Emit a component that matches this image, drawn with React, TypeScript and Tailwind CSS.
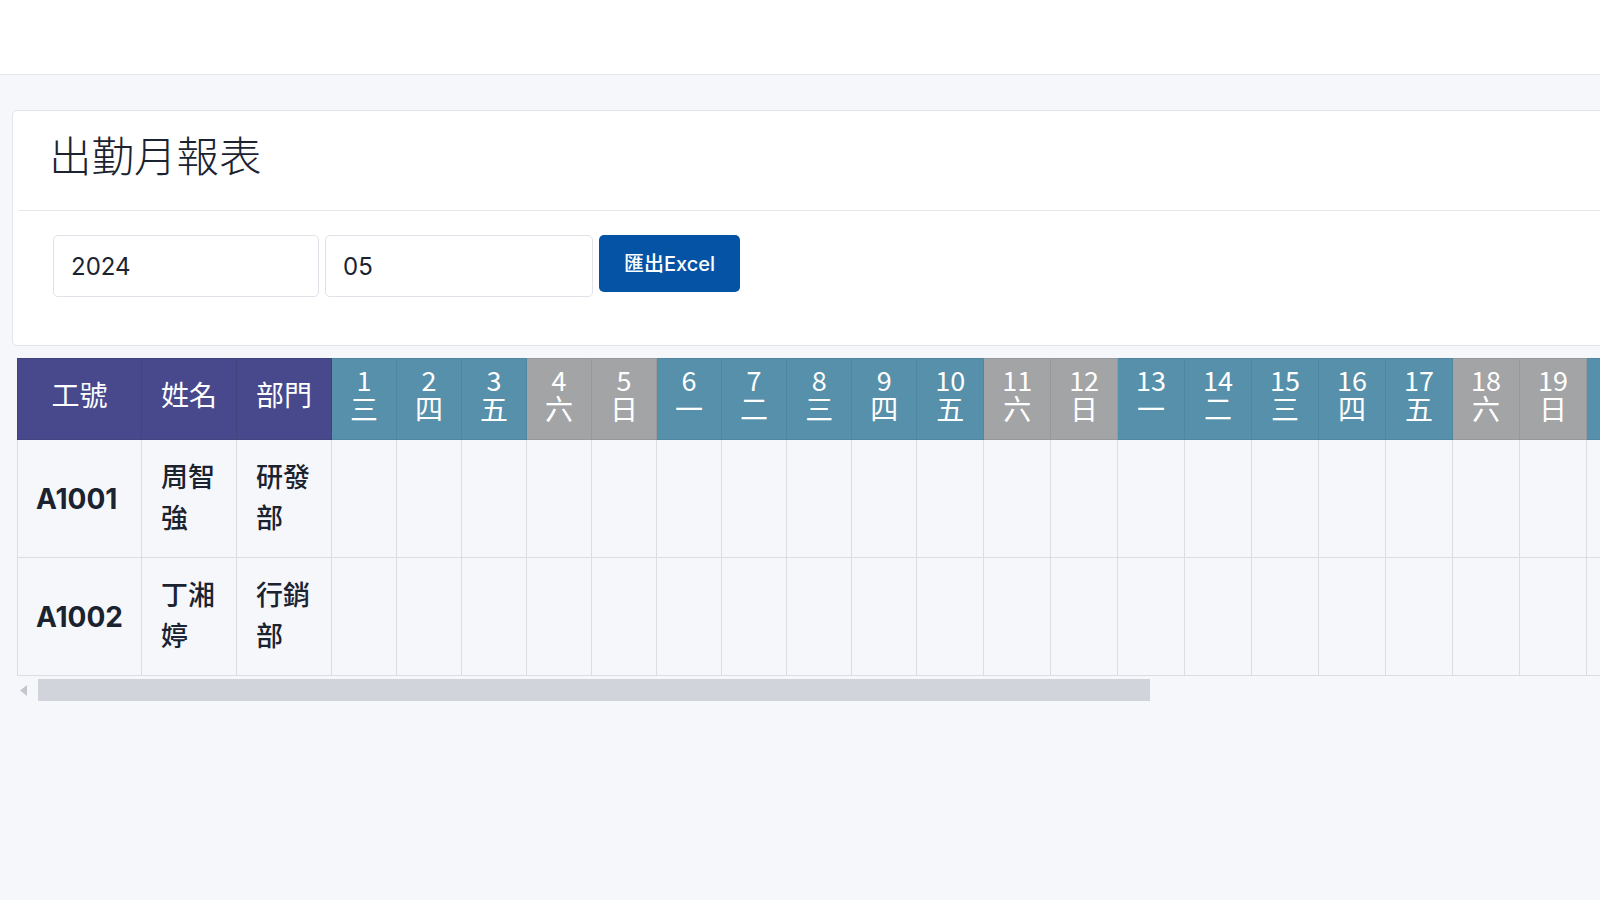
import React from "react";

const cjk = "font-['Inter','Noto_Sans_CJK_TC',sans-serif]";

const weekNames = ["日", "一", "二", "三", "四", "五", "六"];

// 2024年5月：1號是星期三
const days = Array.from({ length: 31 }, (_, i) => {
  const d = i + 1;
  const w = (3 + i) % 7;
  return { d, w: weekNames[w], off: w === 0 || w === 6 };
});

const staff = [
  { id: "A1001", name: "周智強", dept: "研發部" },
  { id: "A1002", name: "丁湘婷", dept: "行銷部" },
];

function App() {
  return (
    <div className={`w-full min-h-screen overflow-hidden bg-[#f6f7fb] ${cjk}`}>
      <header className="h-[75px] bg-white border-b border-[#e3e6eb]" />

      <main className="w-[2500px] pl-[12px] pt-[35px]">
        <div className="bg-white border border-[#e1e4e9] rounded-[5px] p-[6px]">
          <div className="px-[30px] pt-[12px] pb-[31px] border-b border-[#e3e6eb]">
            <h1 className="text-[42.5px] leading-[50px] font-light text-[#1b2330] font-['Noto_Sans_CJK_TC',sans-serif]">
              出勤月報表
            </h1>
          </div>
          <div className="flex items-start gap-[6px] px-[34px] pt-[24px] pb-[42px]">
            <input
              defaultValue="2024"
              className="w-[266px] h-[62px] px-[17px] border border-[#dfe2e8] rounded-[5px] bg-white text-[24px] text-[#1b2330] outline-none"
            />
            <input
              defaultValue="05"
              className="w-[268px] h-[62px] px-[17px] border border-[#dfe2e8] rounded-[5px] bg-white text-[24px] text-[#1b2330] outline-none"
            />
            <button className="h-[57px] px-[25px] rounded-[5px] bg-[#0453a5] text-white text-[20px] font-medium">
              匯出Excel
            </button>
          </div>
        </div>

        <div className="ml-[5px] mt-[12px]">
          <table className="w-px border-collapse border border-[#d6dbe1]">
            <thead>
              <tr className="text-white text-[28px] font-['Noto_Sans_CJK_TC',sans-serif]">
                {["工號", "姓名", "部門"].map((h) => (
                  <th
                    key={h}
                    className="whitespace-nowrap bg-[#47498c] border border-[#42447f] px-[19px] pt-[7px] pb-[17px] font-normal leading-[28px] align-middle"
                  >
                    {h}
                  </th>
                ))}
                {days.map((x) => (
                  <th
                    key={x.d}
                    className={`whitespace-nowrap px-[18px] pt-[7px] pb-[17px] font-normal leading-[28px] text-center ${
                      x.off
                        ? "bg-[#a3a4a6] border border-[#97989b]"
                        : "bg-[#5690aa] border border-[#4f87a0]"
                    }`}
                  >
                    <div className="text-[27px]">{x.d}</div>
                    <div>{x.w}</div>
                  </th>
                ))}
              </tr>
            </thead>
            <tbody className="text-[#1b2330]">
              {staff.map((s) => (
                <tr key={s.id}>
                  <td className="border border-[#d9dee4] px-[18px] text-[28px] font-bold whitespace-nowrap">
                    {s.id}
                  </td>
                  <td className="border border-[#d9dee4] px-[19px] pt-[17px] pb-[18px] text-[27px] leading-[41px] font-medium">
                    {s.name}
                  </td>
                  <td className="border border-[#d9dee4] px-[19px] pt-[17px] pb-[18px] text-[27px] leading-[41px] font-medium">
                    {s.dept}
                  </td>
                  {days.map((x) => (
                    <td key={x.d} className="border border-[#d9dee4]" />
                  ))}
                </tr>
              ))}
            </tbody>
          </table>

          {/* 水平捲軸 */}
          <div className="flex items-center h-[22px] mt-[3px]">
            <svg width="7" height="11" viewBox="0 0 7 11" className="ml-[3px]">
              <path d="M7 0 L0 5.5 L7 11 Z" fill="#c4c7cd" />
            </svg>
            <div className="ml-[11px] w-[1112px] h-[22px] bg-[#d1d4db]" />
          </div>
        </div>
      </main>
    </div>
  );
}

export default App;
